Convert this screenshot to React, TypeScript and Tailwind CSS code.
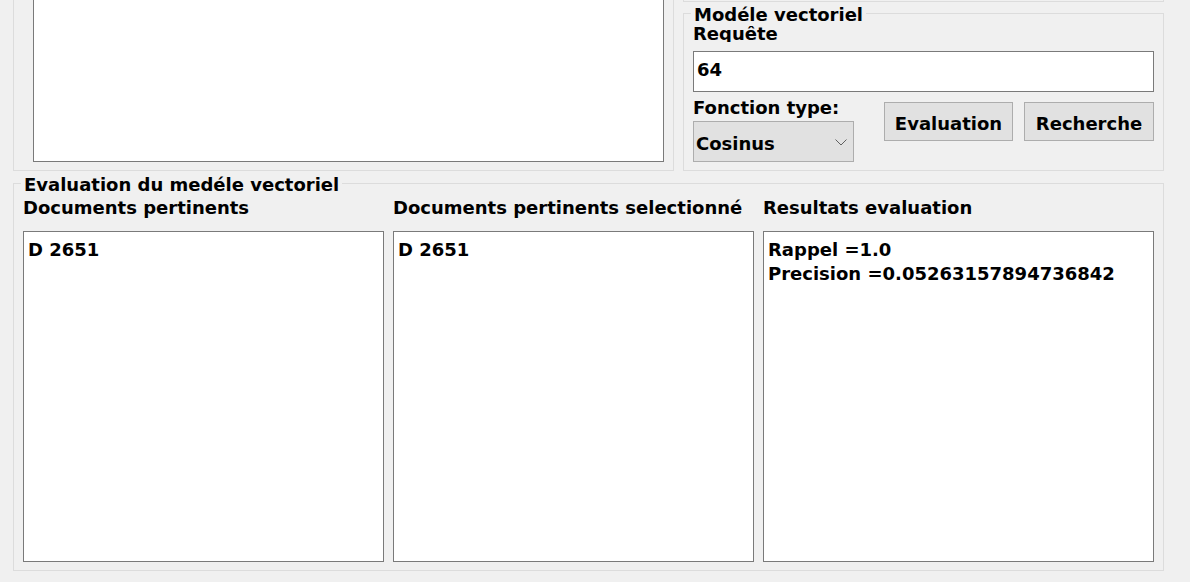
import React from "react";

function ListCol({ label, width, lines }: { label: string; width: string; lines: string[] }) {
  return (
    <div className={`flex flex-col ${width}`}>
      <div className="mt-[5px] h-[16px] leading-[16px] whitespace-nowrap">{label}</div>
      <div className="mt-[15px] h-[331px] bg-white border border-[#7a7a7a] pl-[4px] pt-[6px] leading-[23.5px]">
        {lines.map((l) => (
          <div key={l} className="whitespace-nowrap">{l}</div>
        ))}
      </div>
    </div>
  );
}

export default function App() {
  return (
    <div className="w-[1190px] h-[582px] overflow-hidden bg-[#f0f0f0] text-black font-bold text-[18px] font-['DejaVu_Sans',sans-serif]">
      <div className="flex items-start">
        <div className="ml-[13px] w-[661px] h-[171px] border-x border-b border-[#dcdcdc] flex items-start">
          <div className="ml-[19px] w-[631px] h-[162px] bg-white border-x border-b border-[#7a7a7a]" />
        </div>
        <div className="ml-[9px] w-[481px] flex flex-col">
          <div className="h-[2px] border-x border-b border-[#dcdcdc]" />
          <fieldset className="m-0 p-0 border border-[#dcdcdc]">
            <legend className="ml-[7px] px-[3px] pt-[2px] leading-[21px]">Modéle vectoriel</legend>
            <div className="px-[9px] pb-[8px] flex flex-col">
              <div className="mt-[1px] h-[16px] leading-[16px] overflow-hidden">Requête</div>
              <div className="mt-[9px] h-[41px] bg-white border border-[#7a7a7a] pl-[3px] pt-[7px] leading-[21px]">64</div>
              <div className="flex justify-between items-start">
                <div className="flex flex-col mt-[6px]">
                  <div className="h-[20px] leading-[20px] whitespace-nowrap">Fonction type:</div>
                  <div className="mt-[3px] w-[161px] h-[41px] bg-[#e1e1e1] border border-[#adadad] flex items-start justify-between pl-[2px] pr-[6px]">
                    <span className="pt-[11px] leading-[21px]">Cosinus</span>
                    <svg className="mt-[17px]" width="12" height="7" viewBox="0 0 12 7">
                      <polyline points="0.5,0.5 6,6 11.5,0.5" fill="none" stroke="#606060" strokeWidth="1" />
                    </svg>
                  </div>
                </div>
                <div className="flex gap-[11px] mt-[10px]">
                  <button className="w-[129px] h-[39px] bg-[#e1e1e1] border border-[#adadad] pt-[10px] pb-[6px] leading-[21px] text-center">
                    Evaluation
                  </button>
                  <button className="w-[130px] h-[39px] bg-[#e1e1e1] border border-[#adadad] pt-[10px] pb-[6px] leading-[21px] text-center">
                    Recherche
                  </button>
                </div>
              </div>
            </div>
          </fieldset>
        </div>
      </div>
      <fieldset className="mt-[1px] ml-[13px] w-[1151px] m-0 p-0 border border-[#dcdcdc]">
        <legend className="ml-[7px] px-[3px] pt-[2px] leading-[21px]">Evaluation du medéle vectoriel</legend>
        <div className="flex gap-[9px] px-[9px] pb-[8px]">
          <ListCol label="Documents pertinents" width="w-[361px]" lines={["D 2651"]} />
          <ListCol label="Documents pertinents selectionné" width="w-[361px]" lines={["D 2651"]} />
          <ListCol
            label="Resultats evaluation"
            width="w-[391px]"
            lines={["Rappel =1.0", "Precision =0.05263157894736842"]}
          />
        </div>
      </fieldset>
    </div>
  );
}
